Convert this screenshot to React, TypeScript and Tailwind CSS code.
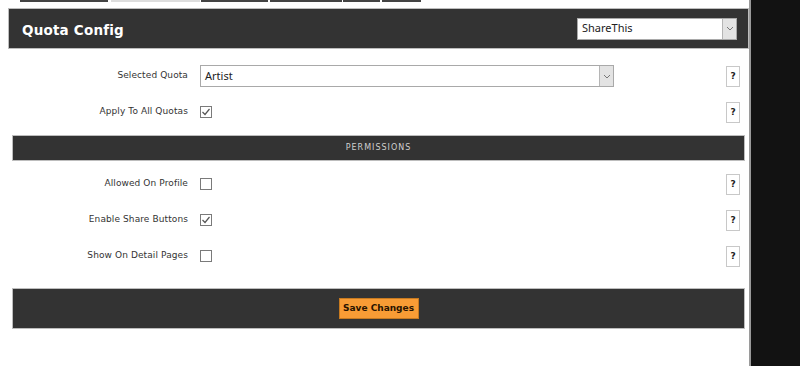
import React from "react";

const tabs = [
  { w: 88, ml: 20, c: "bg-[#444]" },
  { w: 89, ml: 3, c: "bg-[#ddd]" },
  { w: 67, ml: 1, c: "bg-[#444]" },
  { w: 72, ml: 2, c: "bg-[#444]" },
  { w: 37, ml: 1, c: "bg-[#444]" },
  { w: 39, ml: 2, c: "bg-[#444]" },
];

const Checkbox: React.FC<{ checked?: boolean }> = ({ checked }) => (
  <span className="w-[12px] h-[12px] border border-[#7a7a7a] bg-white flex items-center justify-center">
    {checked && (
      <svg width="10" height="10" viewBox="0 0 10 10">
        <path d="M1.5 5 L4 7.5 L8.5 2" stroke="#555" strokeWidth="1.2" fill="none" />
      </svg>
    )}
  </span>
);

const HelpButton = () => (
  <button
    type="button"
    className="w-[14px] h-[21px] border border-[#c8c8c8] bg-white text-[9px] font-bold text-[#222] leading-none flex items-center justify-center"
  >
    ?
  </button>
);

const Row: React.FC<{ label: string; children: React.ReactNode }> = ({ label, children }) => (
  <div className="h-[36px] flex items-center">
    <label className="w-[188px] text-right text-[9px] text-[#333] tracking-[0.1px]">{label}</label>
    <div className="ml-[12px] flex-1 flex items-center">{children}</div>
    <div className="w-[14px] flex">
      <HelpButton />
    </div>
  </div>
);

const Select: React.FC<{ value: string; className: string }> = ({ value, className }) => (
  <div className={"h-[22px] border border-[#a9a9a9] bg-white flex items-center " + className}>
    <span className="flex-1 pl-[4px] text-[11px] text-[#222] font-['Noto_Sans',sans-serif]">{value}</span>
    <span className="w-[14px] h-full bg-[#e3e3e3] border-l border-[#b5b5b5] flex items-center justify-center">
      <svg width="8" height="5" viewBox="0 0 8 5">
        <path d="M1 1 L4 4 L7 1" stroke="#777" strokeWidth="1" fill="none" />
      </svg>
    </span>
  </div>
);

export default function App() {
  return (
    <div className="flex w-[800px] h-[366px] bg-white font-['DejaVu_Sans',sans-serif] overflow-hidden">
      <div className="w-[749px] flex flex-col">
        <div className="h-[8px] flex items-start">
          {tabs.map((t, i) => (
            <div key={i} className={"h-[2px] " + t.c} style={{ width: t.w, marginLeft: t.ml }} />
          ))}
        </div>
        <div className="ml-[8px] h-[41px] bg-[#333] border border-[#bdbdbd] flex items-center justify-between pl-[13px] pr-[11px]">
          <h1 className="pt-[3px] text-[13.5px] font-bold text-white tracking-[0.2px]">Quota Config</h1>
          <Select value="ShareThis" className="w-[160px]" />
        </div>

        <div className="mt-[9px] pr-[9px]">
          <Row label="Selected Quota">
            <Select value="Artist" className="w-[414px]" />
          </Row>
          <Row label="Apply To All Quotas">
            <Checkbox checked />
          </Row>
        </div>

        <div className="mt-[5px] ml-[12px] mr-[4px] h-[26px] bg-[#333] border border-[#bdbdbd] flex items-center justify-center">
          <span className="text-[8px] text-[#cfcfcf] tracking-[1px]">PERMISSIONS</span>
        </div>

        <div className="mt-[5px] pr-[9px]">
          <Row label="Allowed On Profile">
            <Checkbox />
          </Row>
          <Row label="Enable Share Buttons">
            <Checkbox checked />
          </Row>
          <Row label="Show On Detail Pages">
            <Checkbox />
          </Row>
        </div>

        <div className="mt-[14px] ml-[12px] mr-[4px] h-[41px] bg-[#333] border border-[#bdbdbd] flex items-center justify-center">
          <button
            type="button"
            className="w-[80px] h-[21px] bg-[#f89c35] border border-[#c77a20] text-[9px] font-bold text-[#2a1400]"
          >
            Save Changes
          </button>
        </div>
      </div>
      <div className="w-[2px] bg-[#9a9a9a]" />
      <div className="flex-1 bg-[#121212]" />
    </div>
  );
}
